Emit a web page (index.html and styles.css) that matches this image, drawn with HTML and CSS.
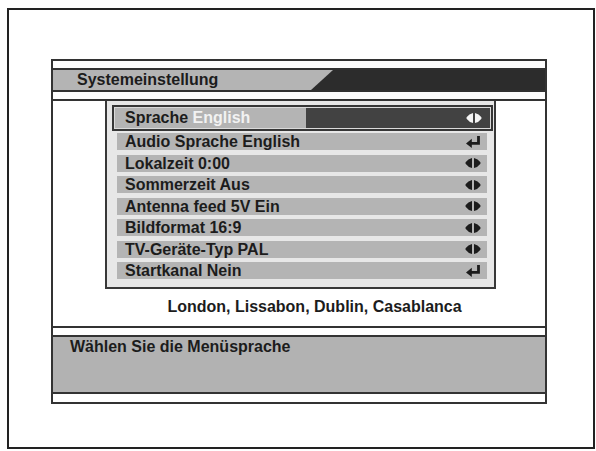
FILE: index.html
```html
<!DOCTYPE html>
<html lang="de">
<head>
<meta charset="utf-8">
<title>Systemeinstellung</title>
<link rel="stylesheet" href="styles.css">
</head>
<body>
<div class="frame">
  <div class="panel">
    <div class="gap"></div>
    <div class="header">
      <div class="hdr-title">Systemeinstellung</div>
      <div class="hdr-fill"></div>
    </div>
    <div class="gap"></div>
    <div class="content">
      <div class="side"></div>
      <div class="menu-col">
        <div class="menu">
          <div class="row sel">
            <div class="sel-main">Sprache <span class="val">English</span></div>
            <div class="sel-bar">
              <svg class="ico" width="16" height="10" viewBox="0 0 16 10"><path d="M7 0V10Q3 9 0.8 6Q0 5 0.8 4Q3 1 7 0Z" fill="#f4f4f4"/><path d="M9 0V10Q13 9 15.2 6Q16 5 15.2 4Q13 1 9 0Z" fill="#f4f4f4"/></svg>
            </div>
          </div>
          <div class="row first"><span>Audio Sprache English</span>
            <svg class="ico" width="15" height="12" viewBox="0 0 15 12"><path d="M12.5 0V7.4H4" fill="none" stroke="#1c1c1c" stroke-width="2.8"/><path d="M5.8 2.8V12L0 7.4Z" fill="#1c1c1c"/></svg>
          </div>
          <div class="row"><span>Lokalzeit 0:00</span>
            <svg class="ico" width="16" height="10" viewBox="0 0 16 10"><path d="M7 0V10Q3 9 0.8 6Q0 5 0.8 4Q3 1 7 0Z" fill="#1c1c1c"/><path d="M9 0V10Q13 9 15.2 6Q16 5 15.2 4Q13 1 9 0Z" fill="#1c1c1c"/></svg>
          </div>
          <div class="row"><span>Sommerzeit Aus</span>
            <svg class="ico" width="16" height="10" viewBox="0 0 16 10"><path d="M7 0V10Q3 9 0.8 6Q0 5 0.8 4Q3 1 7 0Z" fill="#1c1c1c"/><path d="M9 0V10Q13 9 15.2 6Q16 5 15.2 4Q13 1 9 0Z" fill="#1c1c1c"/></svg>
          </div>
          <div class="row"><span>Antenna feed 5V Ein</span>
            <svg class="ico" width="16" height="10" viewBox="0 0 16 10"><path d="M7 0V10Q3 9 0.8 6Q0 5 0.8 4Q3 1 7 0Z" fill="#1c1c1c"/><path d="M9 0V10Q13 9 15.2 6Q16 5 15.2 4Q13 1 9 0Z" fill="#1c1c1c"/></svg>
          </div>
          <div class="row"><span>Bildformat 16:9</span>
            <svg class="ico" width="16" height="10" viewBox="0 0 16 10"><path d="M7 0V10Q3 9 0.8 6Q0 5 0.8 4Q3 1 7 0Z" fill="#1c1c1c"/><path d="M9 0V10Q13 9 15.2 6Q16 5 15.2 4Q13 1 9 0Z" fill="#1c1c1c"/></svg>
          </div>
          <div class="row"><span>TV-Geräte-Typ PAL</span>
            <svg class="ico" width="16" height="10" viewBox="0 0 16 10"><path d="M7 0V10Q3 9 0.8 6Q0 5 0.8 4Q3 1 7 0Z" fill="#1c1c1c"/><path d="M9 0V10Q13 9 15.2 6Q16 5 15.2 4Q13 1 9 0Z" fill="#1c1c1c"/></svg>
          </div>
          <div class="row"><span>Startkanal Nein</span>
            <svg class="ico" width="15" height="12" viewBox="0 0 15 12"><path d="M12.5 0V7.4H4" fill="none" stroke="#1c1c1c" stroke-width="2.8"/><path d="M5.8 2.8V12L0 7.4Z" fill="#1c1c1c"/></svg>
          </div>
        </div>
        <div class="caption">London, Lissabon, Dublin, Casablanca</div>
      </div>
      <div class="side"></div>
    </div>
    <div class="gap lined"></div>
    <div class="help">Wählen Sie die Menüsprache</div>
    <div class="gap tall"></div>
  </div>
</div>
</body>
</html>
```
FILE: styles.css
```css
html, body {
  margin: 0;
  padding: 0;
  background: #ffffff;
  overflow: hidden;
}

body {
  font-family: "Liberation Sans", Arial, sans-serif;
  font-weight: bold;
  font-size: 16px;
  color: #1c1c1c;
}

.frame {
  margin: 8px 0 0 7px;
  width: 588px;
  height: 441px;
  box-sizing: border-box;
  border: 2px solid #222222;
  padding: 49px 0 0 42px;
}

.panel {
  width: 496px;
  box-sizing: border-box;
  border: 2px solid #333333;
  background: #ffffff;
}

.gap {
  height: 7px;
  background: #ffffff;
}

.gap.lined {
  border-top: 2px solid #333333;
}

.gap.tall {
  height: 8px;
}

.header {
  display: flex;
  height: 20px;
  border-top: 2px solid #333333;
  border-bottom: 2px solid #333333;
  background: #b4b4b4;
}

.hdr-title {
  width: 258px;
  box-sizing: border-box;
  padding-left: 24px;
  line-height: 20px;
  white-space: nowrap;
}

.hdr-fill {
  flex: 1;
  background: #2c2c2c;
  clip-path: polygon(22px 0, 100% 0, 100% 100%, 0 100%);
}

.content {
  display: grid;
  grid-template-columns: 52px 391px 1fr;
  height: 225px;
  border-top: 2px solid #333333;
}

.menu {
  border-left: 2px solid #383838;
  border-right: 2px solid #383838;
  border-bottom: 2px solid #383838;
  background: #e7e7e7;
  padding: 4px 7px 8px 10px;
}

.row {
  display: flex;
  align-items: center;
  justify-content: space-between;
  height: 17px;
  line-height: 17px;
  margin-top: 4.5px;
  padding: 0 6px 0 8px;
  background: #b4b4b4;
  white-space: nowrap;
}

.row.first {
  margin-top: 2px;
}

.row.sel {
  height: 20px;
  line-height: 20px;
  margin: 0 -6px 0 -5px;
  padding: 1px;
  border: 2px solid #363636;
  background: #dadada;
  justify-content: flex-start;
}

.sel-main {
  flex: 1;
  height: 20px;
  padding-left: 10px;
  background: #b4b4b4;
}

.val {
  color: #f2f2f2;
}

.sel-bar {
  width: 184px;
  height: 20px;
  box-sizing: border-box;
  padding-right: 8px;
  background: #424242;
  display: flex;
  align-items: center;
  justify-content: flex-end;
}

.ico {
  display: block;
  flex: none;
}

.caption {
  padding: 8px 0 0 28px;
  line-height: 20px;
  text-align: center;
  white-space: nowrap;
}

.help {
  height: 55px;
  border-top: 2px solid #333333;
  border-bottom: 2px solid #333333;
  background: #b2b2b2;
  padding-left: 17px;
  line-height: 20px;
}
```
